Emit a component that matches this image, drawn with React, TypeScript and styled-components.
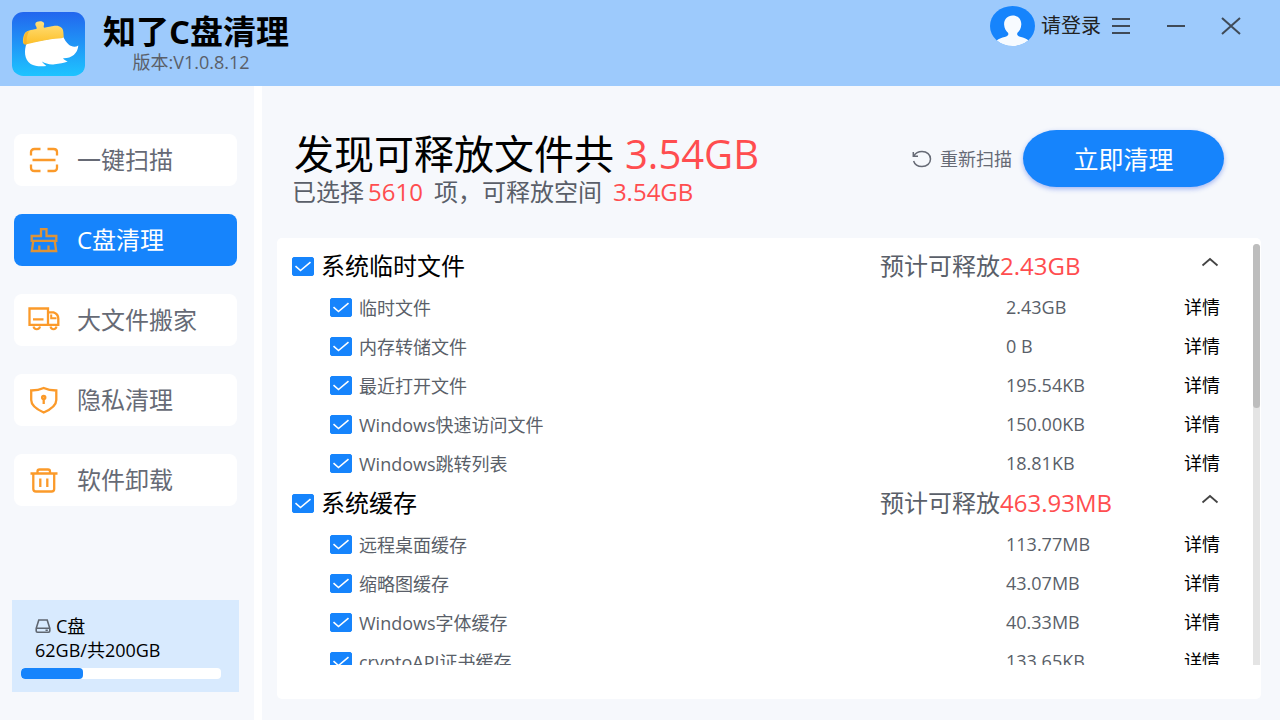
import React, { useState } from "react";
import styled, { createGlobalStyle } from "styled-components";

const BLUE = "#1684fc";
const RED = "#ff4d4f";
const GREY = "#5a5f69";
const ORANGE = "#fb9a2a";

const GlobalStyle = createGlobalStyle`
  *, *::before, *::after { box-sizing: border-box; }
  body { margin: 0; background: #f6f8fc; }
  body, button, input {
    font-family: "Open Sans", "Noto Sans CJK SC", sans-serif;
  }
  button { border: 0; padding: 0; background: none; cursor: pointer; }
  svg { display: block; flex: none; }
  h1, h2, p { margin: 0; font-weight: 400; }
`;

const Window = styled.div`
  display: flex;
  flex-direction: column;
  height: 100vh;
  min-height: 600px;
  background: #f6f8fc;
  color: #000;
`;

/* ---------- title bar ---------- */

const TitleBar = styled.header`
  display: flex;
  justify-content: space-between;
  align-items: flex-start;
  height: 86px;
  flex: none;
  padding: 0 36px 0 12px;
  background: #9dcafc;
`;

const Brand = styled.div`
  display: flex;
  gap: 18px;
  padding-top: 12px;
`;

const BrandText = styled.div`
  display: flex;
  flex-direction: column;
  align-items: center;
`;

const AppName = styled.h1`
  && { font-weight: 700; }
  font-size: 33px;
  line-height: 40px;
  white-space: nowrap;
`;

const Version = styled.p`
  padding-right: 10px;
  font-size: 18px;
  line-height: 20px;
  color: ${GREY};
`;

const WindowTools = styled.div`
  display: flex;
  align-items: center;
  height: 52px;
  color: #3f4a57;
`;

const LoginButton = styled.button`
  display: flex;
  align-items: center;
  gap: 6px;
  margin-right: 7px;
  font-size: 20px;
  line-height: 28px;
  color: #222;
`;

const ToolButton = styled.button<{ $space?: boolean }>`
  display: grid;
  place-items: center;
  width: 26px;
  height: 26px;
  margin-left: ${(p) => (p.$space ? "29px" : "0")};
  color: inherit;
`;

/* ---------- body ---------- */

const Body = styled.div`
  display: flex;
  flex: 1;
  min-height: 0;
`;

const Sidebar = styled.aside`
  display: flex;
  flex-direction: column;
  width: 262px;
  flex: none;
  padding: 48px 15px 28px 12px;
  border-right: 8px solid #fff;
`;

const Nav = styled.nav`
  display: flex;
  flex-direction: column;
  gap: 28px;
  padding: 0 2px;
`;

const NavButton = styled.button<{ $active: boolean }>`
  display: flex;
  align-items: center;
  gap: 17px;
  height: 52px;
  padding-left: 14px;
  border-radius: 8px;
  font-size: 24px;
  line-height: 32px;
  background: ${(p) => (p.$active ? BLUE : "#fff")};
  color: ${(p) => (p.$active ? "#fff" : "#666a75")};
`;

const DiskCard = styled.section`
  display: flex;
  flex-direction: column;
  margin-top: auto;
  padding: 14px 18px 13px 9px;
  height: 92px;
  background: #d8eafe;
  font-size: 18px;
  line-height: 24px;
`;

const DiskLine = styled.p`
  display: flex;
  align-items: center;
  gap: 5px;
  padding-left: 14px;
`;

const Meter = styled.div`
  height: 11px;
  margin-top: 6px;
  border-radius: 4px;
  background: #fff;
  overflow: hidden;
`;

const MeterFill = styled.div`
  height: 100%;
  border-radius: 4px;
  background: ${BLUE};
`;

const Main = styled.main`
  display: flex;
  flex-direction: column;
  flex: 1;
  min-width: 0;
  padding: 44px 19px 21px 15px;
`;

const Summary = styled.section`
  display: flex;
  justify-content: space-between;
  align-items: flex-start;
  height: 108px;
  flex: none;
  padding: 0 37px 0 15px;
`;

const Headline = styled.h2`
  display: flex;
  gap: 11px;
  margin-left: 2px;
  font-size: 40px;
  line-height: 48px;
  white-space: nowrap;
`;

const Selected = styled.p`
  font-size: 24px;
  line-height: 28px;
  color: ${GREY};
  white-space: nowrap;
`;

const Hot = styled.span`
  color: ${RED};
`;

const Count = styled(Hot)`
  margin: 0 11px 0 4px;
`;

const Amount = styled(Hot)`
  margin-left: 11px;
`;

const Actions = styled.div`
  display: flex;
  align-items: center;
  gap: 11px;
`;

const RescanButton = styled.button`
  display: flex;
  align-items: center;
  gap: 8px;
  font-size: 18px;
  line-height: 24px;
  color: #666a75;
  white-space: nowrap;
`;

const CleanButton = styled.button`
  width: 201px;
  height: 57px;
  border-radius: 34px / 29px;
  background: ${BLUE};
  box-shadow: 0 2px 5px rgba(60, 100, 230, 0.45);
  color: #fff;
  font-size: 25px;
  line-height: 32px;
`;

/* ---------- result list ---------- */

const Panel = styled.section`
  display: flex;
  flex: 1;
  min-height: 0;
  padding: 6px 1px 34px 0;
  border-radius: 5px;
  background: #fff;
`;

const Scroller = styled.div`
  flex: 1;
  min-width: 0;
  padding-top: 2px;
  overflow-y: auto;
  scrollbar-width: none;
`;

const Track = styled.div`
  width: 7px;
  flex: none;
  border-radius: 4px 4px 0 0;
  background: #e4e4e4;
`;

const Thumb = styled.div`
  height: 39%;
  border-radius: 4px;
  background: #bdbdbd;
`;

const GroupHeader = styled.div`
  display: grid;
  grid-template-columns: 1fr 304px 69px;
  align-items: center;
  height: 40px;
  margin-bottom: 1px;
  padding-left: 15px;
  font-size: 24px;
  line-height: 32px;
`;

const Estimate = styled.span`
  color: ${GREY};
  white-space: nowrap;
`;

const ToggleButton = styled.button`
  display: grid;
  place-items: center;
  width: 52px;
  height: 32px;
  padding-bottom: 8px;
  color: #444;
`;

const ItemTable = styled.table`
  width: 100%;
  margin-bottom: 1px;
  table-layout: fixed;
  border-collapse: collapse;
  font-size: 18px;
  line-height: 24px;
  color: ${GREY};
`;

const NameCell = styled.td`
  height: 39px;
  padding: 0 0 0 53px;
`;

const SizeCell = styled.td`
  width: 178px;
  padding: 0;
`;

const DetailCell = styled.td`
  width: 69px;
  padding: 0;
`;

const DetailLink = styled.a`
  color: #000;
  text-decoration: none;
`;

const CheckLabel = styled.label`
  display: inline-flex;
  align-items: center;
  gap: 7px;
  white-space: nowrap;
  vertical-align: middle;
`;

const CheckFace = styled.span`
  display: inline-grid;
  place-items: center;
  color: #fff;
  > * { grid-area: 1 / 1; }
  > svg { pointer-events: none; }
`;

const CheckInput = styled.input`
  appearance: none;
  width: 22px;
  height: 19px;
  margin: 0;
  border: 1px solid ${BLUE};
  border-radius: 2px;
  background: #fff;
  &:checked { background: ${BLUE}; }
`;

function Check({ text }: { text: string }) {
  return (
    <CheckLabel>
      <CheckFace>
        <CheckInput type="checkbox" defaultChecked />
        <svg width="22" height="19" viewBox="0 0 22 19" fill="none" stroke="currentColor" strokeWidth="1.6">
          <path d="M3.500 9.200 8.500 13.500 18.500 5.200" />
        </svg>
      </CheckFace>
      {text}
    </CheckLabel>
  );
}

/* ---------- drawings ---------- */

const Logo = () => (
  <svg width="73" height="64" viewBox="36 37 219 191" preserveAspectRatio="none" aria-hidden="true">
    <defs>
      <linearGradient id="sky" x1="0" y1="0" x2="0" y2="1">
        <stop offset="0" stopColor="#2266ee" />
        <stop offset="1" stopColor="#1ec4ff" />
      </linearGradient>
      <linearGradient id="gold" x1="0" y1="0" x2="0" y2="1">
        <stop offset="0" stopColor="#ffe07c" />
        <stop offset="1" stopColor="#fdbf28" />
      </linearGradient>
    </defs>
    <rect x="36" y="37" width="219" height="191" rx="34" ry="32" fill="url(#sky)" />
    <path
      d="M80 130C72 150 72 178 92 192C104 199 122 200 139 198C133 194 129 190 126 185C136 191 150 195 164 193C178 192 192 190 203 185C196 182 192 179 189 175C214 176 233 162 235 137C226 143 214 141 206 134C199 128 194 119 189 110Z"
      fill="#fff"
    />
    <path
      d="M109 88C113 82 105 79 106 72C108 64 128 62 132 70C134 76 129 78 132 84L160 79C178 76 189 83 190 97L191 110C191 114 188 115 184 115C148 117 114 125 80 133C74 135 70 133 69 128C68 118 70 108 74 101C79 93 94 91 109 88Z"
      fill="url(#gold)"
    />
    <path d="M80 96C72 103 71 118 73 134L80 133C79 119 81 106 87 94Z" fill="#f5ae22" opacity=".7" />
  </svg>
);

const Avatar = () => (
  <svg width="45" height="40" viewBox="0 0 45 40" aria-hidden="true">
    <defs>
      <clipPath id="face">
        <ellipse cx="22.5" cy="20" rx="22.5" ry="20" />
      </clipPath>
    </defs>
    <g clipPath="url(#face)">
      <rect width="45" height="40" fill={BLUE} />
      <path
        d="M22.7 9.5C28 9.5 31.500 13.500 31.300 18.500C31.100 22.500 29.500 25 27.500 26.700C26.600 28.500 27.300 30 30 30.800C34 31.600 37.500 33 38.500 35L38 40H7L6.500 35C8 33 11.500 31.600 15.500 30.800C18.200 30 18.900 28.500 18 26.700C16 25 14.300 22.500 14.100 18.500C13.900 13.500 17.400 9.500 22.700 9.500Z"
        fill="#f7fbff"
      />
    </g>
  </svg>
);

const NavIcon = ({ children }: { children: React.ReactNode }) => (
  <svg width="32" height="28" viewBox="0 0 32 28" fill="none" stroke={ORANGE} strokeWidth="2.3" aria-hidden="true">
    {children}
  </svg>
);

const NAV = [
  {
    text: "一键扫描",
    icon: (
      <NavIcon>
        <path d="M3 9.500V6Q3 3 6.500 3H12.500M19.500 3H25.500Q29 3 29 6V9.500M29 18.500V22Q29 25 25.500 25H19.500M12.500 25H6.500Q3 25 3 22V18.500M4.500 14H27.500" />
      </NavIcon>
    ),
  },
  {
    text: "C盘清理",
    icon: (
      <NavIcon>
        <g stroke="#dd9338">
          <path d="M13 10V3.200H18.500V10H28.300V14.800H3.700V10ZM5.300 14.800 3.800 25H28.200L26.700 14.800M11.300 25V19.500M20.500 25V19.500" />
        </g>
      </NavIcon>
    ),
  },
  {
    text: "大文件搬家",
    icon: (
      <NavIcon>
        <path d="M1.500 2.500H20V18.800H1.500ZM5 13.300H15.500M20 6.300H25.500Q30.300 8 30.300 12.500V18.800H20" />
        <path d="M23.200 8.500V12.300H28.500M5.500 20.500C6 24 11.500 24 12 20.500M22.500 20.500C23 24 28 24 28.500 20.500" strokeWidth="2" />
      </NavIcon>
    ),
  },
  {
    text: "隐私清理",
    icon: (
      <NavIcon>
        <path d="M15.700 2C19.500 3.800 24 4.500 28.300 4.500V14C28.300 20 22.500 23.500 15.700 26.500C9 23.500 3.200 20 3.200 14V4.500C7.500 4.500 12 3.800 15.700 2Z" />
        <circle cx="15.700" cy="11.500" r="1.600" />
        <path d="M15.700 11.500V18" />
      </NavIcon>
    ),
  },
  {
    text: "软件卸载",
    icon: (
      <NavIcon>
        <path d="M2.500 7.500H29.500M9.500 7.500V5.500Q9.500 3.500 11.500 3.500H20Q22 3.500 22 5.500V7.500M5.300 7.500V23Q5.300 25.500 8 25.500H23.500Q26.200 25.500 26.200 23V7.500M12.300 12.500V21M19.300 12.500V21" />
      </NavIcon>
    ),
  },
];

const DiskIcon = () => (
  <svg width="16" height="14" viewBox="0 0 16 14" fill="none" stroke="#5f6670" strokeWidth="1.600" aria-hidden="true">
    <path d="M3.800 1H12.200L14.800 9.300V12Q14.800 13.200 13.500 13.200H2.500Q1.200 13.200 1.200 12V9.300ZM1.500 9.300H14.500M10.500 11.300H12.800" />
  </svg>
);

const RescanIcon = () => (
  <svg width="20" height="18" viewBox="0 0 20 18" fill="none" stroke="#666a75" strokeWidth="1.500" aria-hidden="true">
    <path d="M1.300 2V6.300H6M1.800 6C3.500 3 6.500 1.500 10 1.500C15 1.500 18.500 4.800 18.500 9C18.500 13.200 15 16.500 10 16.500C5.800 16.500 2.700 14.500 1.600 11" />
  </svg>
);

/* ---------- data ---------- */

const GROUPS = [
  {
    title: "系统临时文件",
    total: "2.43GB",
    items: [
      ["临时文件", "2.43GB"],
      ["内存转储文件", "0 B"],
      ["最近打开文件", "195.54KB"],
      ["Windows快速访问文件", "150.00KB"],
      ["Windows跳转列表", "18.81KB"],
    ],
  },
  {
    title: "系统缓存",
    total: "463.93MB",
    items: [
      ["远程桌面缓存", "113.77MB"],
      ["缩略图缓存", "43.07MB"],
      ["Windows字体缓存", "40.33MB"],
      ["cryptoAPI证书缓存", "133.65KB"],
    ],
  },
];

function Group({ title, total, items }: (typeof GROUPS)[number]) {
  const [open, setOpen] = useState(true);
  return (
    <section>
      <GroupHeader>
        <Check text={title} />
        <Estimate>
          预计可释放<Hot>{total}</Hot>
        </Estimate>
        <ToggleButton aria-label={title} aria-expanded={open} onClick={() => setOpen(!open)}>
          <svg width="18" height="10" viewBox="0 0 18 10" fill="none" stroke="currentColor" strokeWidth="1.800">
            <path d={open ? "M1.500 8.500 9 2 16.500 8.500" : "M1.500 2 9 8.500 16.500 2"} />
          </svg>
        </ToggleButton>
      </GroupHeader>
      {open && (
        <ItemTable>
          <tbody>
            {items.map(([name, size]) => (
              <tr key={name}>
                <NameCell>
                  <Check text={name} />
                </NameCell>
                <SizeCell>{size}</SizeCell>
                <DetailCell>
                  <DetailLink href="#detail">详情</DetailLink>
                </DetailCell>
              </tr>
            ))}
          </tbody>
        </ItemTable>
      )}
    </section>
  );
}

export default function App() {
  const [active, setActive] = useState("C盘清理");
  const [scroll, setScroll] = useState(0);

  const onScroll = (e: React.UIEvent<HTMLDivElement>) => {
    const el = e.currentTarget;
    const range = el.scrollHeight - el.clientHeight;
    setScroll(range > 0 ? (el.scrollTop / range) * (el.clientHeight * 0.61) : 0);
  };

  return (
    <>
      <GlobalStyle />
      <Window>
        <TitleBar>
          <Brand>
            <Logo />
            <BrandText>
              <AppName>知了C盘清理</AppName>
              <Version>版本:V1.0.8.12</Version>
            </BrandText>
          </Brand>
          <WindowTools>
            <LoginButton>
              <Avatar />
              请登录
            </LoginButton>
            <ToolButton aria-label="菜单">
              <svg width="20" height="18" viewBox="0 0 20 18" stroke="currentColor" strokeWidth="2">
                <path d="M1 2H19M1 9H19M1 16H19" />
              </svg>
            </ToolButton>
            <ToolButton aria-label="最小化" $space>
              <svg width="20" height="18" viewBox="0 0 20 18" stroke="currentColor" strokeWidth="2">
                <path d="M1 9H19" />
              </svg>
            </ToolButton>
            <ToolButton aria-label="关闭" $space>
              <svg width="20" height="18" viewBox="0 0 20 18" stroke="currentColor" strokeWidth="2">
                <path d="M1 1 19 17M19 1 1 17" />
              </svg>
            </ToolButton>
          </WindowTools>
        </TitleBar>
        <Body>
          <Sidebar>
            <Nav>
              {NAV.map((n) => (
                <NavButton key={n.text} $active={n.text === active} onClick={() => setActive(n.text)}>
                  {n.icon}
                  {n.text}
                </NavButton>
              ))}
            </Nav>
            <DiskCard>
              <DiskLine>
                <DiskIcon />
                C盘
              </DiskLine>
              <DiskLine>62GB/共200GB</DiskLine>
              <Meter>
                <MeterFill style={{ width: `${(62 / 200) * 100}%` }} />
              </Meter>
            </DiskCard>
          </Sidebar>
          <Main>
            <Summary>
              <div>
                <Headline>
                  发现可释放文件共<Hot>3.54GB</Hot>
                </Headline>
                <Selected>
                  已选择<Count>5610</Count>项，可释放空间<Amount>3.54GB</Amount>
                </Selected>
              </div>
              <Actions>
                <RescanButton>
                  <RescanIcon />
                  重新扫描
                </RescanButton>
                <CleanButton>立即清理</CleanButton>
              </Actions>
            </Summary>
            <Panel>
              <Scroller onScroll={onScroll}>
                {GROUPS.map((g) => (
                  <Group key={g.title} {...g} />
                ))}
              </Scroller>
              <Track>
                <Thumb style={{ transform: `translateY(${scroll}px)` }} />
              </Track>
            </Panel>
          </Main>
        </Body>
      </Window>
    </>
  );
}
